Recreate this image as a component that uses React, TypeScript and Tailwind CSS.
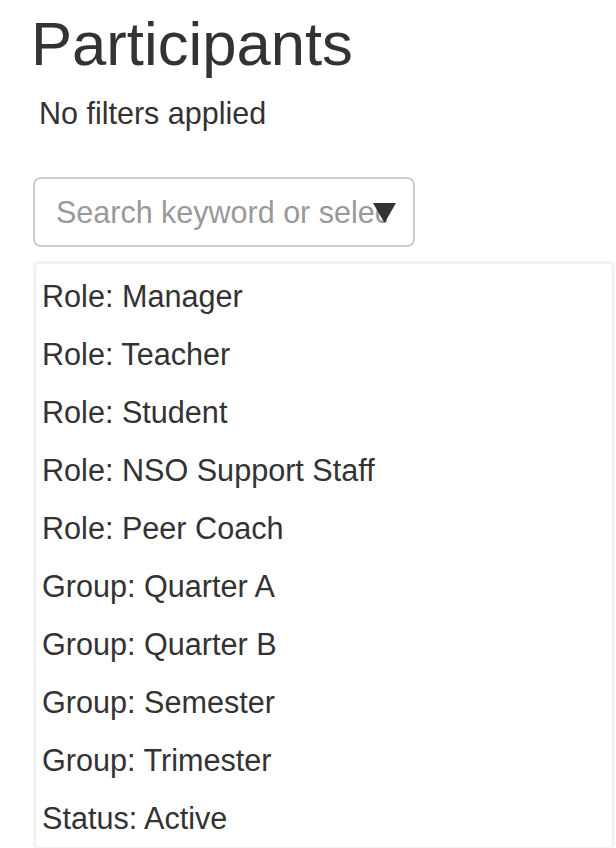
import React from 'react';

const options = [
  'Role: Manager',
  'Role: Teacher',
  'Role: Student',
  'Role: NSO Support Staff',
  'Role: Peer Coach',
  'Group: Quarter A',
  'Group: Quarter B',
  'Group: Semester',
  'Group: Trimester',
  'Status: Active',
];

export default function App() {
  return (
    <div className="min-h-screen bg-white pl-[28px] pt-[10px] font-['Liberation_Sans',Arial,sans-serif] text-[#333]">
      <h1 className="ml-[3px] text-[61.6px] leading-[67px] font-normal">Participants</h1>
      <p className="ml-[11px] mt-[18px] text-[30.5px] leading-[36px]">No filters applied</p>

      <div className="relative ml-[5px] mt-[46px] w-[382px]">
        <input
          type="text"
          placeholder="Search keyword or select"
          className="h-[70px] w-full rounded-[8px] border-2 border-[#cccccc] bg-white pl-[21px] pr-[26px] text-[30.5px] text-[#333] outline-none placeholder:text-[#999]"
        />
        <svg
          className="pointer-events-none absolute left-[340px] top-[26px]"
          width="23"
          height="20"
          viewBox="0 0 23 20"
        >
          <polygon points="0,0 23,0 11.5,20" fill="#333" />
        </svg>
      </div>

      <div className="ml-[5px] mt-[14px] w-[582px] rounded-[6px] border-[3px] border-[#f2f2f2] bg-white pt-[3px] pl-[6px]">
        {options.map((opt) => (
          <div key={opt} className="h-[58px] text-[30.6px] leading-[58px] whitespace-nowrap">
            {opt}
          </div>
        ))}
      </div>
    </div>
  );
}
